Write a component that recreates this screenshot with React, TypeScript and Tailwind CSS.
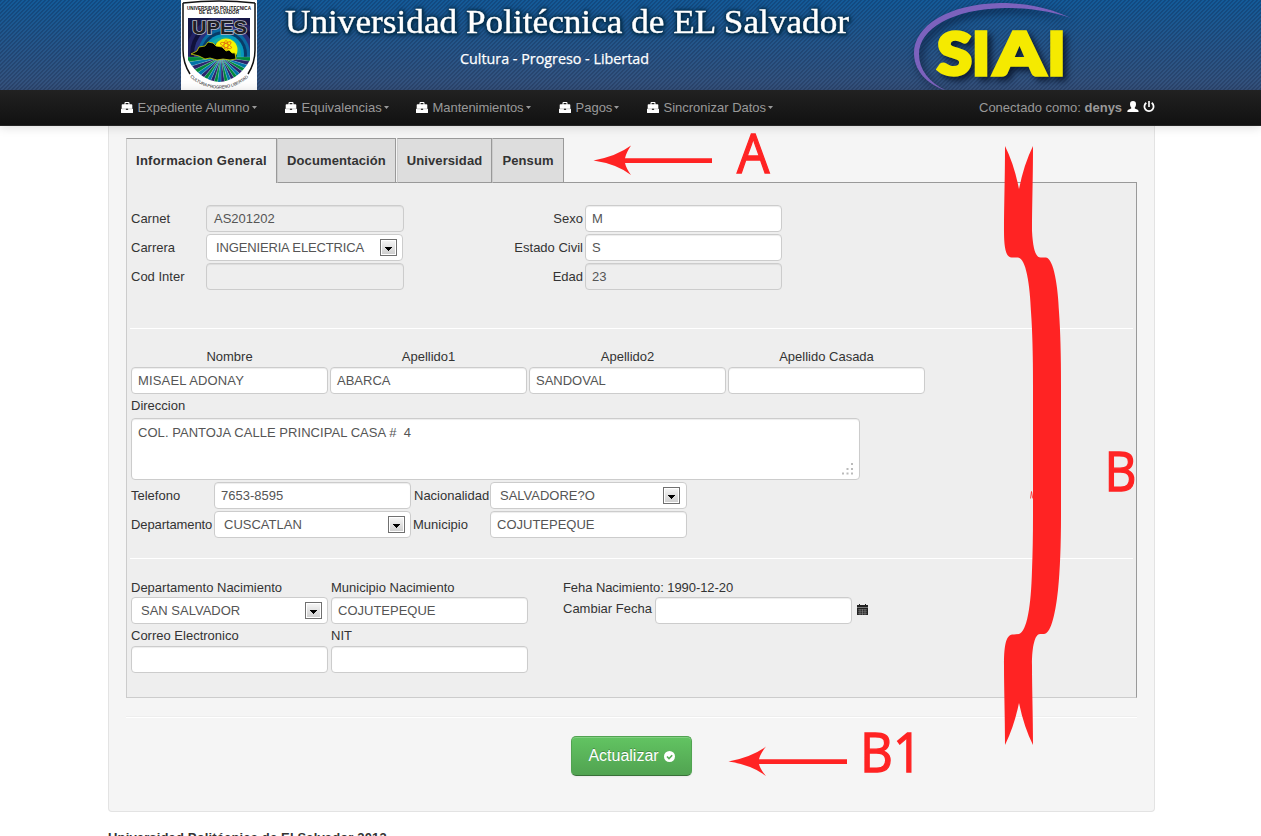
import type { ReactNode } from "react";
import { clsx } from "clsx";

function Briefcase() {
  return (
    <svg width="12" height="11" viewBox="0 0 12 11" className="mb-px shrink-0" fill="#fff">
      <path d="M3.5 2.2V1Q3.5 0 4.5 0h3q1 0 1 1v1.2H10.500q.8 0 .8.8V6.500H.7V3q0-.8.8-.8zM4.6 2.2h2.8V1.100H4.6z" />
      <path d="M0 7.100h4.8v.8h2.4v-.8H12v3.300q0 .6-.6.6H.6q-.6 0-.6-.6z" />
      <path d="M.7 6h4.600v1.500H.7zM6.700 6h4.600v1.500H6.700z" fill="#ddd" />
    </svg>
  );
}

function NavItem({ label, className, caret }: { label: string; className: string; caret: string }) {
  return (
    <div className={clsx("flex items-center", className)}>
      <Briefcase />
      <span className="ml-[4.500px] whitespace-nowrap">{label}</span>
      <svg width="5" height="3" viewBox="0 0 5 3" className={caret} fill="#999">
        <path d="M0 0h5L2.500 3z" />
      </svg>
    </div>
  );
}

function Field({ children, className, disabled }: { children?: ReactNode; className?: string; disabled?: boolean }) {
  return (
    <div
      role="textbox"
      className={clsx(
        "flex h-[27px] shrink-0 items-center rounded-[4px] border border-[#ccc] whitespace-pre text-[#555] shadow-[inset_0_1px_1px_rgba(0,0,0,0.075)]",
        disabled ? "bg-[#eee]" : "bg-white",
        className ?? "w-[197px] pl-[6px]",
      )}
    >
      {children}
    </div>
  );
}

function Select({ children, className }: { children: ReactNode; className?: string }) {
  return (
    <div
      role="combobox"
      className={clsx(
        "flex h-[27px] w-[197px] shrink-0 items-center justify-between rounded-[4px] border border-[#ccc] bg-white pl-[9px] whitespace-nowrap text-[#555]",
        className ?? "pr-[6px]",
      )}
    >
      <span>{children}</span>
      <svg width="17" height="17" viewBox="0 0 17 17" className="shrink-0">
        <defs>
          <linearGradient id="drop" x1="0" y1="0" x2="0" y2="1">
            <stop offset="0" stopColor="#f4f4f4" />
            <stop offset="1" stopColor="#cfcfcf" />
          </linearGradient>
        </defs>
        <rect x=".5" y=".5" width="16" height="16" fill="#fff" stroke="#707070" />
        <rect x="2" y="2" width="13" height="13" fill="url(#drop)" />
        <path d="M5 8h7v1h-1v1h-1v1H9v1H8v-1H7v-1H6V9H5z" fill="#000" />
      </svg>
    </div>
  );
}

function Crest() {
  const cx = 40;
  const cy = 57;
  const rays = Array.from({ length: 22 }, (_, i) => {
    const a = (Math.PI * i) / 22;
    const b = (Math.PI * (i + 1)) / 22;
    return `M${cx} ${cy}L${cx + 60 * Math.cos(a)} ${cy + 62 * Math.sin(a)}L${cx + 60 * Math.cos(b)} ${cy + 62 * Math.sin(b)}Z`;
  });
  const colors = ["#00883c", "#29246b", "#0074a8"];
  return (
    <svg width="76" height="90" viewBox="0 0 76 90" className="ml-[181px] shrink-0">
      <defs>
        <clipPath id="shield">
          <path d="M7 18H69V60Q57 81 38 82Q19 80 7 60Z" />
        </clipPath>
        <clipPath id="sky">
          <path d="M7 18H69V59H7Z" />
        </clipPath>
        <path id="motto" d="M9 77Q23 89 39 88.500Q55 88 68 77" />
      </defs>
      <rect width="76" height="90" fill="#fff" />
      <path d="M2 3Q38-1 74 3M2 3V50Q2 63 9 74M74 3V50Q74 63 67 74" fill="none" stroke="#111" strokeWidth="1.500" />
      <g clipPath="url(#shield)">
        <g clipPath="url(#sky)">
          <rect x="7" y="18" width="62" height="42" fill="#161746" />
          {[
            [38, "#232363"],
            [34, "#10113a"],
            [30, "#28317c"],
            [26, "#0a69a0"],
            [23, "#083b68"],
            [20, "#0797bb"],
            [17, "#17aaa0"],
            [13, "#083c59"],
          ].map(([r, c]) => (
            <circle key={r} cx="43" cy="54" r={r} fill={String(c)} />
          ))}
          <circle cx="45" cy="50" r="11.500" fill="#f7f500" />
        </g>
        {rays.map((d, i) => (
          <path key={i} d={d} fill={colors[i % 3]} stroke="#b8dced" strokeWidth=".2" />
        ))}
      </g>
      <g fill="none" stroke="#e06a12" strokeWidth=".8">
        <ellipse cx="45" cy="45.500" rx="6" ry="2" transform="rotate(25 45 45.500)" />
        <ellipse cx="45" cy="45.500" rx="6" ry="2" transform="rotate(-35 45 45.500)" />
        <ellipse cx="45" cy="45.500" rx="5" ry="2" transform="rotate(90 45 45.500)" />
      </g>
      <path
        d="M16 51l2-4 6-1 3-4 5 1 3 3 6 1 4 4 3-1 3 3 3 0 1 6-6 1-7-1-6 1-7-2-5 1-6-3-8-2z"
        fill="#000"
        stroke="#cfd400"
        strokeWidth=".8"
      />
      <g fontFamily="Liberation Sans, sans-serif" fontWeight="bold" fill="#111">
        <text x="6" y="9.500" fontSize="5" textLength="64" lengthAdjust="spacingAndGlyphs">
          UNIVERSIDAD POLITECNICA
        </text>
        <text x="18" y="14.200" fontSize="4.800" textLength="40" lengthAdjust="spacingAndGlyphs">
          DE EL SALVADOR
        </text>
        <text fontSize="4.300" fontWeight="normal">
          <textPath href="#motto" textLength="64">CULTURA PROGRESO LIBERTAD</textPath>
        </text>
      </g>
      <text
        x="11"
        y="33.500"
        fontFamily="Liberation Sans, sans-serif"
        fontWeight="bold"
        fontSize="19"
        textLength="55"
        fill="#202024"
        stroke="#b8b8c4"
        strokeWidth="1.600"
        paintOrder="stroke"
        lengthAdjust="spacingAndGlyphs"
      >
        UPES
      </text>
    </svg>
  );
}

function Banner() {
  return (
    <header className="flex h-[90px] bg-[linear-gradient(135deg,rgba(10,20,50,0.22)_25%,transparent_25%_50%,rgba(10,20,50,0.22)_50%_75%,transparent_75%),linear-gradient(#135a98,#36527c)] bg-[size:4px_4px,100%_100%]">
      <Crest />
      <svg width="600" height="90" viewBox="257 0 600 90" className="shrink-0">
        <text
          x="285"
          y="32.500"
          fontFamily="Liberation Serif, serif"
          fontSize="34"
          textLength="564"
          lengthAdjust="spacingAndGlyphs"
          fill="#fff"
          stroke="#fff"
          strokeWidth=".4"
          className="[filter:drop-shadow(0_0_1px_#06304f)_drop-shadow(0_0_2px_#06304f)_drop-shadow(1px_1px_1px_#06304f)]"
        >
          Universidad Politécnica de EL Salvador
        </text>
        <text
          x="460"
          y="63.500"
          fontFamily="Open Sans, sans-serif"
          fontSize="14.500"
          textLength="189"
          fill="#fff"
          stroke="#fff"
          strokeWidth=".25"
          lengthAdjust="spacingAndGlyphs"
        >
          Cultura - Progreso - Libertad
        </text>
      </svg>
      <svg width="240" height="90" viewBox="857 0 240 90" className="shrink-0">
        <g className="[filter:drop-shadow(3px_4px_4px_rgba(5,15,40,0.75))]">
          <path
            d="M1071 18C1045 6 1022 3 1000 3C948 4 914 26 914 53C914 70 926 84 946 90.500C929 82 919 70 919 54C919 29 952 9 1005 8C1030 8 1050 11 1071 18Z"
            fill="#7c62bd"
          />
        </g>
        <g
          className="[filter:drop-shadow(4px_4px_3px_rgba(5,15,35,0.8))]"
          fontFamily="Lato, sans-serif"
          fontWeight="900"
          fontSize="59.500"
          fill="#f5ea00"
          stroke="#f5ea00"
          strokeWidth="3.500"
        >
          <text x="937" y="75.300" textLength="35" lengthAdjust="spacingAndGlyphs">S</text>
          <text x="972" y="75.300">I</text>
          <text x="994" y="75.300" textLength="51" lengthAdjust="spacingAndGlyphs">A</text>
          <text x="1047.500" y="75.300">I</text>
        </g>
      </svg>
    </header>
  );
}

function NavBar() {
  return (
    <nav className="relative z-10 flex h-9 items-center border-b border-[#252525] bg-linear-to-b from-[#222] to-[#111] pl-[121px] text-[#999] shadow-[0_1px_10px_rgba(0,0,0,0.15)]">
      <NavItem label="Expediente Alumno" className="w-[164px]" caret="ml-[2px]" />
      <NavItem label="Equivalencias" className="w-[131px]" caret="ml-[2px]" />
      <NavItem label="Mantenimientos" className="w-[143px] tracking-[-0.05px]" caret="ml-[2px]" />
      <NavItem label="Pagos" className="w-[88px]" caret="ml-[2px]" />
      <NavItem label="Sincronizar Datos" className="w-[332px]" caret="ml-[2px]" />
      <span className="w-[148px] whitespace-nowrap">
        Conectado como: <b>denys</b>
      </span>
      <svg width="29" height="12" viewBox="0 0 29 12" className="mb-[2px]" fill="#fff">
        <path d="M6 0c2 0 3 1.200 3 3.200 0 1.500-.6 2.600-1.200 3.200v1.200l3 1.200q.8.400.8 2.200H.3q0-1.800.9-2.200l3-1.200V6.400C3.600 5.800 3 4.700 3 3.200 3 1.200 4 0 6 0z" />
        <path d="M19.300 1.800A4.600 4.600 0 1 0 24.700 1.800" fill="none" stroke="#fff" strokeWidth="1.800" />
        <rect x="21.200" y="0" width="1.600" height="6" />
      </svg>
    </nav>
  );
}

function Tab({ label, className, active }: { label: string; className: string; active?: boolean }) {
  return (
    <div
      className={clsx(
        "flex h-[45px] items-center justify-center border-t border-r border-l border-t-[#999] border-r-[#999] border-l-[#ccc] font-bold",
        active ? "bg-[#eee] tracking-[0.23px]" : "border-b border-b-[#999] bg-[#ddd] tracking-[0.1px]",
        className,
      )}
    >
      {label}
    </div>
  );
}

function Annotations() {
  return (
    <svg width="1261" height="836" viewBox="0 0 1261 836" className="pointer-events-none absolute top-0 left-0 z-20" fill="#ff2323">
      <path d="M1005 146Q1014 164 1019 189Q1024 164 1033 146C1033 180 1032 205 1032 231C1033 250 1036 258 1041 257.500L1046 257.500C1054 259 1058 287 1059 312Q1061 340 1061 385V515Q1061 560 1058 590C1055 618 1050 634 1044 634L1040 634C1035 634 1032 646 1032 665C1032 690 1033 715 1033 745Q1024 727 1019 703Q1014 727 1005 745C1005 715 1004 690 1004 665C1004 641 1007 634 1014 634.500L1019 634C1027 631 1031 607 1032 570Q1033 545 1033 515V385Q1033 340 1031 312C1030 285 1026 258 1018 257.500L1012 257.500C1006 258 1004 248 1004 231C1004 205 1005 180 1005 146Z" />
      <path d="M593.500 160.500Q617 156 631 145.500Q626 153 625 158.200H712V163H625Q626 168 631 175Q617 164 593.500 160.500Z" />
      <path d="M728.500 761.500Q752 757 766 746.500Q760 754 759 759.200H847V764H759Q760 769 766 776Q752 765 728.500 761.500Z" />
      <path d="M1030.500 498.500L1031.500 491.500L1032.800 498.500" fill="none" stroke="#ff2323" strokeWidth=".8" />
      <g fontFamily="Open Sans, sans-serif" fontSize="55" stroke="#ff2323" strokeWidth="1.300">
        <text x="737" y="172.500" textLength="32.500" lengthAdjust="spacingAndGlyphs">A</text>
        <text x="1104.500" y="490.500" textLength="32" lengthAdjust="spacingAndGlyphs">B</text>
        <text x="860" y="771.500" textLength="62" lengthAdjust="spacingAndGlyphs">B1</text>
      </g>
    </svg>
  );
}

export default function App() {
  return (
    <div className="relative h-[836px] w-[1261px] overflow-hidden bg-white font-['Liberation_Sans',Arial,sans-serif] text-[13px] leading-5 text-[#333]">
      <Banner />
      <NavBar />
      <main className="ml-[108px] h-[686px] w-[1047px] rounded-b-[4px] border border-t-0 border-[#e3e3e3] bg-[#f5f5f5] px-[17px] pt-3">
        <div className="relative z-[1] flex h-[45px]">
          <Tab label="Informacion General" className="w-[151px]" active />
          <Tab label="Documentación" className="w-[119px]" />
          <Tab label="Universidad" className="ml-px w-[95px]" />
          <Tab label="Pensum" className="w-[72px]" />
        </div>
        <section className="-mt-px h-[516px] w-[1011px] border border-t-[#999] border-r-[#999] border-b-[#ccc] border-l-[#ccc] bg-[#eee] px-[3px] pt-[22px]">
          <div className="flex h-[124px] border-b border-white pl-px">
            <div className="flex w-[454px] flex-col gap-[2px]">
              <div className="flex items-center">
                <span className="w-[75px]">Carnet</span>
                <Field disabled className="w-[198px] pl-[7px]">AS201202</Field>
              </div>
              <div className="flex items-center">
                <span className="w-[75px]">Carrera</span>
                <Select className="pr-[5px] tracking-[-0.15px]">INGENIERIA ELECTRICA</Select>
              </div>
              <div className="flex items-center">
                <span className="w-[75px]">Cod Inter</span>
                <Field disabled className="w-[198px]" />
              </div>
            </div>
            <div className="-ml-[100px] flex w-[297px] flex-col items-end gap-[2px]">
              <div className="flex items-center gap-[2px]">Sexo<Field>M</Field></div>
              <div className="flex items-center gap-[2px]">Estado Civil<Field>S</Field></div>
              <div className="flex items-center gap-[2px]">Edad<Field disabled>23</Field></div>
            </div>
          </div>

          <div className="h-[230px] border-b border-white pt-[18px] pl-px">
            <div className="flex gap-[2px] text-center">
              <span className="w-[197px]">Nombre</span>
              <span className="w-[197px]">Apellido1</span>
              <span className="w-[197px]">Apellido2</span>
              <span className="w-[197px]">Apellido Casada</span>
            </div>
            <div className="flex gap-[2px]">
              <Field className="w-[197px] pl-[6px] tracking-[0.15px]">MISAEL ADONAY</Field>
              <Field>ABARCA</Field>
              <Field>SANDOVAL</Field>
              <Field />
            </div>
            <div className="mt-px h-[23px] leading-[22px]">Direccion</div>
            <div
              role="textbox"
              className="flex h-[62px] w-[729px] items-end justify-between rounded-[4px] border border-[#ccc] bg-white pr-[5px] pb-1 pl-[6px] whitespace-pre text-[#555] shadow-[inset_0_1px_1px_rgba(0,0,0,0.075)]"
            >
              <span className="self-start pt-[4px] tracking-[0.05px]">{"COL. PANTOJA CALLE PRINCIPAL CASA #  4"}</span>
              <svg width="13" height="12" viewBox="0 0 13 12" fill="#bbb">
                <path d="M10 0h2v2h-2zM10 5h2v2h-2zM10 9.500h2v2h-2zM5.500 5h2v2h-2zM5.500 9.500h2v2h-2zM1 9.500h2v2H1z" />
              </svg>
            </div>
            <div className="mt-[2px] flex items-center">
              <span className="w-[83px]">Telefono</span>
              <Field>7653-8595</Field>
              <span className="ml-[3px] w-[76px] whitespace-nowrap">Nacionalidad</span>
              <Select>SALVADORE?O</Select>
            </div>
            <div className="mt-[2px] flex items-center">
              <span className="w-[83px] tracking-[-0.1px]">Departamento</span>
              <Select className="pr-[5px]">CUSCATLAN</Select>
              <span className="ml-[2px] w-[77px]">Municipio</span>
              <Field>COJUTEPEQUE</Field>
            </div>
          </div>

          <div className="flex pt-[19px] pl-px">
            <div className="flex w-[432px] flex-wrap gap-x-[3px]">
              <span className="h-[19px] w-[197px]">Departamento Nacimiento</span>
              <span className="h-[19px] w-[197px]">Municipio Nacimiento</span>
              <Select className="pr-[5px]">SAN SALVADOR</Select>
              <Field>COJUTEPEQUE</Field>
              <span className="h-[22px] w-[197px] leading-6">Correo Electronico</span>
              <span className="h-[22px] w-[197px] leading-6">NIT</span>
              <Field />
              <Field />
            </div>
            <div>
              <div className="h-[19px] tracking-[-0.07px]">Feha Nacimiento: 1990-12-20</div>
              <div className="flex">
                <span className="w-[92px] pt-[2px]">Cambiar Fecha</span>
                <Field />
                <svg width="11" height="12" viewBox="0 0 11 12" className="mt-[7px] ml-[5px]">
                  <path d="M0 1h2V0h1v1h5V0h1v1h2v2H0z" fill="#222" />
                  <path d="M0 3h11v1H0z" fill="#777" />
                  <path d="M0 4h11v7H0z" fill="#222" />
                  <path d="M1 5.800h9M1 7.800h9M1 9.700h9" stroke="#999" strokeWidth=".5" />
                  <path d="M3 5v6M5.500 5v6M8 5v6" stroke="#999" strokeWidth=".5" />
                </svg>
              </div>
            </div>
          </div>
        </section>
        <hr className="mt-[18px] h-[2px] w-[1011px] border-t border-b border-t-[#eee] border-b-white" />
        <div className="flex justify-center pt-[18px]">
          <button className="flex h-10 w-[121px] items-center justify-center gap-[5px] rounded-[5px] border border-[#51a351] border-b-[#387038] bg-linear-to-b from-[#62c462] to-[#51a351] text-[16px] text-white [text-shadow:0_-1px_0_rgba(0,0,0,0.25)] shadow-[inset_0_1px_0_rgba(255,255,255,0.2),0_1px_2px_rgba(0,0,0,0.05)]">
            Actualizar
            <svg width="11" height="11" viewBox="0 0 11 11">
              <circle cx="5.500" cy="5.500" r="5.500" fill="#fff" />
              <path d="M3 5.500l2 2 3.200-3.300" fill="none" stroke="#55ad55" strokeWidth="1.600" />
            </svg>
          </button>
        </div>
      </main>
      <footer className="mt-4 ml-[108px] font-bold tracking-[0.15px] whitespace-nowrap">Universidad Politécnica de El Salvador 2013</footer>
      <Annotations />
    </div>
  );
}
